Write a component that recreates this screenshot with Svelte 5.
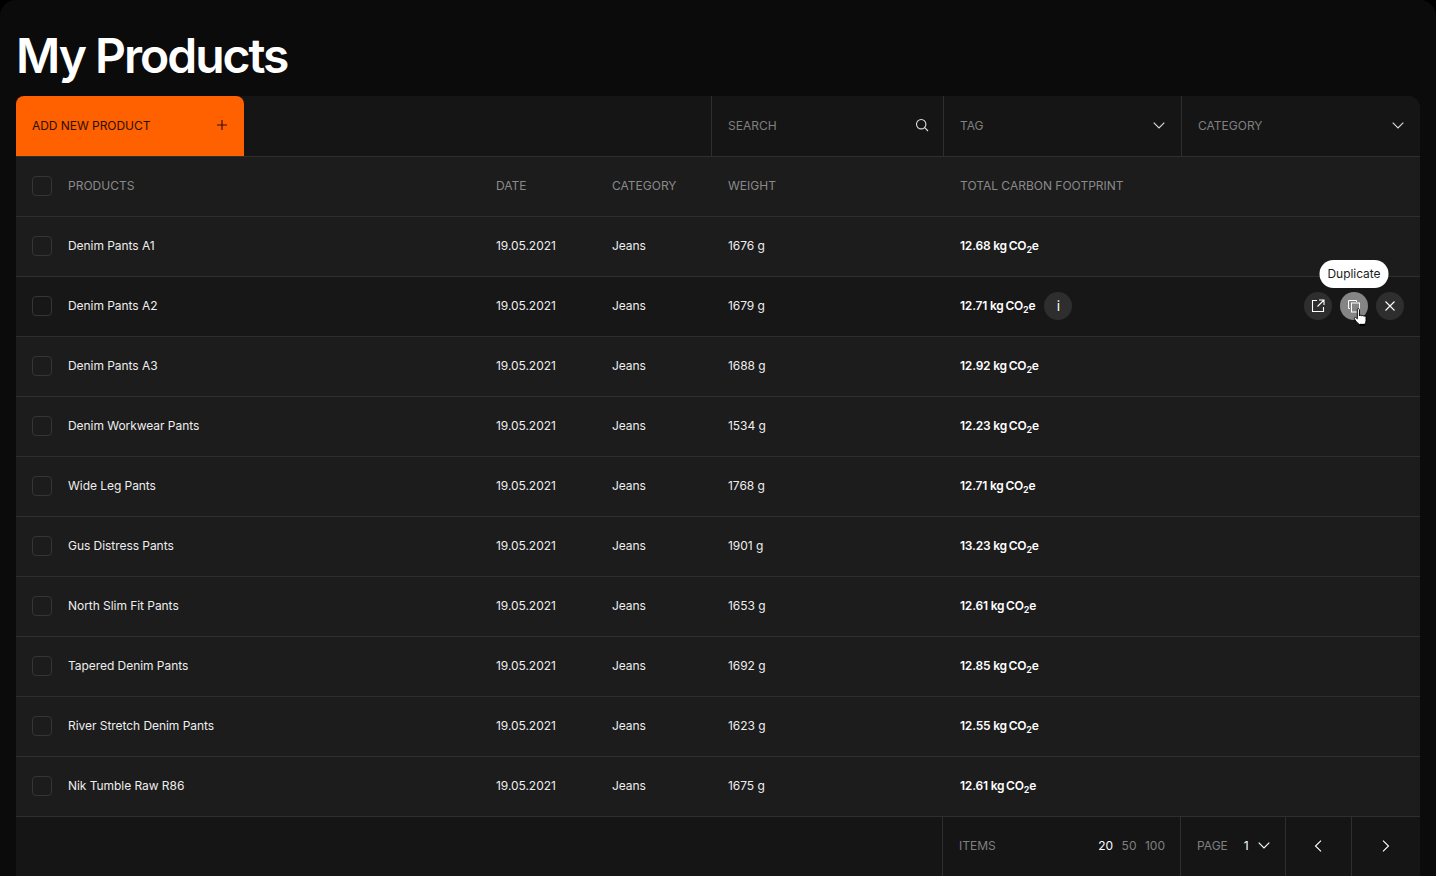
<script lang="ts">
  interface Product { name: string; weight: string; total: string; }
  const products: Product[] = [
    { name: "Denim Pants A1", weight: "1676 g", total: "12.68" },
    { name: "Denim Pants A2", weight: "1679 g", total: "12.71" },
    { name: "Denim Pants A3", weight: "1688 g", total: "12.92" },
    { name: "Denim Workwear Pants", weight: "1534 g", total: "12.23" },
    { name: "Wide Leg Pants", weight: "1768 g", total: "12.71" },
    { name: "Gus Distress Pants", weight: "1901 g", total: "13.23" },
    { name: "North Slim Fit Pants", weight: "1653 g", total: "12.61" },
    { name: "Tapered Denim Pants", weight: "1692 g", total: "12.85" },
    { name: "River Stretch Denim Pants", weight: "1623 g", total: "12.55" },
    { name: "Nik Tumble Raw R86", weight: "1675 g", total: "12.61" }
  ];
  const hovered = 1;
</script>

<div class="page">
  <h1>My Products</h1>
  <section class="panel">
    <div class="toolbar">
      <button type="button" class="add">
        ADD NEW PRODUCT
        <svg width="12" height="12" viewBox="0 0 12 12"><path d="M6 1v10M1 6h10" /></svg>
      </button>
      <div class="spacer"></div>
      <div class="filter search">
        SEARCH
        <svg width="14" height="14" viewBox="0 0 14 14"><circle cx="6.200" cy="6.200" r="4.700" /><path d="M9.700 9.700l3.300 3.300" /></svg>
      </div>
      <div class="filter tag">
        TAG
        <svg width="12" height="7" viewBox="0 0 12 7"><path d="M.7.7 6 6 11.300.7" /></svg>
      </div>
      <div class="filter category">
        CATEGORY
        <svg width="12" height="7" viewBox="0 0 12 7"><path d="M.7.7 6 6 11.300.7" /></svg>
      </div>
    </div>

    <div class="row head">
      <span class="check"></span>
      <span>PRODUCTS</span>
      <span>DATE</span>
      <span>CATEGORY</span>
      <span>WEIGHT</span>
      <span>TOTAL CARBON FOOTPRINT</span>
    </div>

    {#each products as p, i}
      <div class="row body" class:hovered={i === hovered}>
        <span class="check"></span>
        <span>{p.name}</span>
        <span>19.05.2021</span>
        <span>Jeans</span>
        <span>{p.weight}</span>
        <span class="total">
          <b>{p.total} <span class="unit">kg CO<sub>2</sub>e</span></b>
          {#if i === hovered}<span class="round info">i</span>{/if}
        </span>
        {#if i === hovered}
          <div class="actions">
            <span class="round">
              <svg width="14" height="14" viewBox="0 0 14 14"><path d="M6 1.500H1.500v11h11V8M8 1h5v5M13 1 6.500 7.500" /></svg>
            </span>
            <span class="round active">
              <svg class="copy" width="14" height="14" viewBox="0 0 14 14"><path d="M3 9.500H1.500V1.500H9.500V3" /><rect x="4.500" y="4" width="8" height="9" /></svg>
              <span class="tooltip">Duplicate</span>
              <svg class="cursor" width="15" height="18" viewBox="0 0 13 17"><path d="M3.500 1.500c0-1.300 2-1.300 2 0V7.500c.5-1 2-1 2.200 0 .5-.8 1.900-.6 2 .4.600-.6 2-.3 2 .8v3.300c0 1.500-.7 2.500-1.200 3.500H5.200C4 14.500 1 11.500.7 10c-.2-1.200 1-1.500 1.800-.7l1 1z" /><path d="M6 15.500h4.500v1H6z" fill="#000" /></svg>
            </span>
            <span class="round">
              <svg width="12" height="12" viewBox="0 0 12 12"><path d="M1.500 1.500l9 9M10.500 1.500l-9 9" /></svg>
            </span>
          </div>
        {/if}
      </div>
    {/each}

    <div class="footer">
      <div class="cell items">
        <span class="muted">ITEMS</span>
        <span class="sizes"><em>20</em><span>50</span><span>100</span></span>
      </div>
      <div class="cell pager">
        <span class="muted">PAGE</span>
        <span class="current">1</span>
        <svg width="12" height="7" viewBox="0 0 12 7"><path d="M.7.7 6 6 11.300.7" /></svg>
      </div>
      <div class="cell arrow prev"><svg width="8" height="12" viewBox="0 0 8 12"><path d="M7 .7 1.500 6 7 11.300" /></svg></div>
      <div class="cell arrow next"><svg width="8" height="12" viewBox="0 0 8 12"><path d="M1 .7 6.500 6 1 11.300" /></svg></div>
    </div>
  </section>
</div>

<style>
  :global(body) { margin: 0; background: #000; overflow: hidden; }
  .page { height: 876px; box-sizing: border-box; padding: 0 16px; overflow: hidden; border-radius: 16px 16px 0 0; background: #0b0b0b; color: #fff; font-family: Inter, "Liberation Sans", sans-serif; font-size: 12px; }
  h1 { height: 96px; margin: 0; box-sizing: border-box; padding-top: 27px; font-size: 48px; line-height: 58px; font-weight: 600; letter-spacing: -2px; }
  .panel { border-radius: 12px 12px 0 0; background: #1c1c1c; }
  svg { display: block; flex: none; fill: none; stroke: currentColor; stroke-width: 1.100; }

  .toolbar { display: flex; height: 61px; box-sizing: border-box; border-bottom: 1px solid #2e2e2e; border-radius: 12px 12px 0 0; background: #151515; }
  .add { display: flex; width: 228px; align-items: center; justify-content: space-between; border: 0; border-radius: 8px 8px 0 0; background: #ff6000; color: #2a1000; font: inherit; letter-spacing: -.05px; padding: 0 16px 2px; }
  .spacer { flex: 1; }
  .filter { display: flex; align-items: center; justify-content: space-between; box-sizing: border-box; border-left: 1px solid #2e2e2e; color: #808080; padding: 0 16px 2px; }
  .filter svg { color: #ddd; }
  .search { width: 232px; padding-right: 14px; }
  .tag { width: 238px; }
  .category { width: 239px; border-radius: 0 12px 0 0; }

  .row { position: relative; display: grid; height: 60px; box-sizing: border-box; grid-template-columns: 36px 428px 116px 116px 232px 1fr; align-items: center; border-bottom: 1px solid #2e2e2e; padding: 0 0 2px 16px; }
  .head { color: #8a8a8a; }
  .body { color: #eee; letter-spacing: -.05px; }
  .hovered { background: #171717; }
  .check { width: 20px; height: 20px; box-sizing: border-box; border: 1px solid #353535; border-radius: 4px; }
  .total { display: flex; align-items: center; gap: 9px; color: #fff; }
  b { font-weight: 600; letter-spacing: -.2px; }
  .unit { word-spacing: -1px; }
  sub { font-size: 9px; line-height: 0; vertical-align: -3px; }

  .round { position: relative; display: flex; width: 28px; height: 28px; align-items: center; justify-content: center; border-radius: 50%; background: #2e2e2e; }
  .info { font-size: 14px; font-weight: 400; }
  .actions { position: absolute; top: 15px; right: 16px; display: flex; gap: 8px; color: #fff; }
  .active { background: #858585; }
  .copy { stroke-width: 1; }
  .tooltip { position: absolute; top: -32px; left: 50%; transform: translateX(-50%); border-radius: 14px; background: #fff; color: #1c1c1c; line-height: 28px; letter-spacing: -.05px; padding: 0 8px; white-space: nowrap; }
  .cursor { position: absolute; top: 16px; left: 13px; fill: #fff; stroke: #000; stroke-width: .9; }

  .footer { display: flex; height: 60px; justify-content: flex-end; background: #151515; }
  .cell { display: flex; height: 100%; align-items: center; box-sizing: border-box; border-left: 1px solid #2e2e2e; padding-bottom: 2px; }
  .muted { color: #808080; }
  .items { width: 238px; justify-content: space-between; padding: 0 15px 3px 16px; }
  .sizes { display: flex; gap: 8.500px; color: #808080; }
  em { font-style: normal; color: #fff; }
  .pager { width: 105px; padding: 0 16px 3px; }
  .current { margin: 0 9px 0 16px; }
  .arrow { width: 66px; justify-content: center; padding-right: 2px; }
  .next { width: 69px; padding-right: 0; }
</style>
